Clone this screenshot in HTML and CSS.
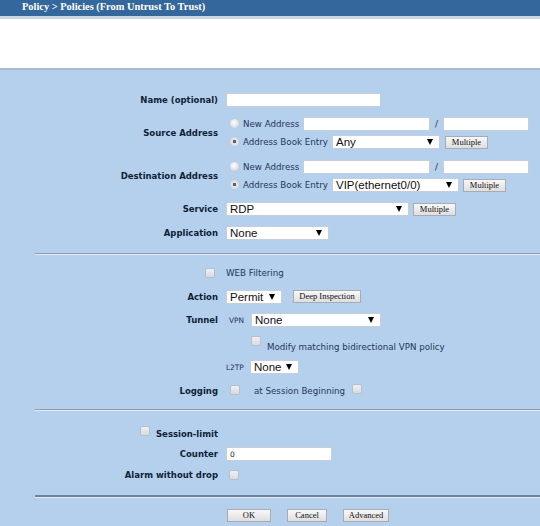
FILE: index.html
```html
<!DOCTYPE html>
<html>
<head>
<meta charset="utf-8">
<title>Policy</title>
<link rel="stylesheet" href="styles.css">
</head>
<body>
<div class="titlebar"><span class="title">Policy &gt; Policies (From Untrust To Trust)</span></div>
<div class="whiteband"></div>
<div class="form">
  <div class="section s1">
    <div class="row">
      <div class="lbl">Name (optional)</div>
      <div class="field"><input class="inp w-name" type="text"></div>
    </div>
    <div class="row block">
      <div class="lbl">Source Address</div>
      <div class="field col">
        <div class="line">
          <span class="radio"></span><span class="txt t-new">New Address</span>
          <input class="inp w-addr" type="text"><span class="slash">/</span><input class="inp w-mask" type="text">
        </div>
        <div class="line">
          <span class="radio on"></span><span class="txt t-book">Address Book Entry</span>
          <div class="sel w-any"><span>Any</span><i class="arr"></i></div>
          <button class="btn b-mult">Multiple</button>
        </div>
      </div>
    </div>
    <div class="row block b-dst">
      <div class="lbl">Destination Address</div>
      <div class="field col">
        <div class="line">
          <span class="radio"></span><span class="txt t-new">New Address</span>
          <input class="inp w-addr" type="text"><span class="slash">/</span><input class="inp w-mask" type="text">
        </div>
        <div class="line">
          <span class="radio on"></span><span class="txt t-book">Address Book Entry</span>
          <div class="sel w-vip"><span>VIP(ethernet0/0)</span><i class="arr"></i></div>
          <button class="btn b-mult">Multiple</button>
        </div>
      </div>
    </div>
    <div class="row">
      <div class="lbl">Service</div>
      <div class="field">
        <div class="sel w-svc"><span>RDP</span><i class="arr"></i></div>
        <button class="btn b-mult">Multiple</button>
      </div>
    </div>
    <div class="row">
      <div class="lbl">Application</div>
      <div class="field">
        <div class="sel w-app"><span>None</span><i class="arr"></i></div>
      </div>
    </div>
  </div>
  <div class="sep"></div>
  <div class="section s2">
    <div class="row">
      <div class="lbl"><span class="chk c-web"></span></div>
      <div class="field"><span class="txt">WEB Filtering</span></div>
    </div>
    <div class="row">
      <div class="lbl">Action</div>
      <div class="field">
        <div class="sel w-act"><span>Permit</span><i class="arr"></i></div>
        <button class="btn b-deep">Deep Inspection</button>
      </div>
    </div>
    <div class="row">
      <div class="lbl">Tunnel</div>
      <div class="field">
        <span class="small t-vpn">VPN</span>
        <div class="sel w-vpn"><span>None</span><i class="arr"></i></div>
      </div>
    </div>
    <div class="row">
      <div class="lbl"></div>
      <div class="field">
        <span class="chk c-mod"></span><span class="txt t-mod">Modify matching bidirectional VPN policy</span>
      </div>
    </div>
    <div class="row">
      <div class="lbl"></div>
      <div class="field">
        <span class="small t-l2tp">L2TP</span>
        <div class="sel w-l2tp"><span>None</span><i class="arr"></i></div>
      </div>
    </div>
    <div class="row">
      <div class="lbl">Logging</div>
      <div class="field">
        <span class="chk c-log"></span><span class="txt t-sess">at Session Beginning</span><span class="chk c-sess"></span>
      </div>
    </div>
  </div>
  <div class="sep"></div>
  <div class="section s3">
    <div class="row">
      <div class="lbl"><span class="chk c-limit"></span>Session-limit</div>
      <div class="field"></div>
    </div>
    <div class="row">
      <div class="lbl">Counter</div>
      <div class="field"><input class="inp w-cnt" type="text" value="0"></div>
    </div>
    <div class="row">
      <div class="lbl">Alarm without drop</div>
      <div class="field"><span class="chk c-alarm"></span></div>
    </div>
  </div>
  <div class="sep dark"></div>
  <div class="buttons">
    <button class="btn b-ok">OK</button>
    <button class="btn b-cancel">Cancel</button>
    <button class="btn b-adv">Advanced</button>
  </div>
</div>
</body>
</html>
```
FILE: styles.css
```css
html, body {
  margin: 0;
  padding: 0;
}
body {
  width: 540px;
  height: 526px;
  overflow: hidden;
  background: #b5d0ec;
  font-family: "DejaVu Sans", Verdana, sans-serif;
  color: #1b2b44;
}
.titlebar {
  height: 16px;
  background: #34679b;
  border-bottom: 3px solid #c9d7e6;
  box-sizing: content-box;
}
.title {
  display: block;
  padding-left: 22px;
  font-family: "Liberation Serif", "Times New Roman", serif;
  font-weight: bold;
  font-size: 10.4px;
  line-height: 14px;
  color: #ffffff;
}
.whiteband {
  height: 49px;
  background: #ffffff;
  border-bottom: 2px solid #a9bccf;
}
.form {
  display: flex;
  flex-direction: column;
}
.section {
  display: flex;
  flex-direction: column;
}
.s1 {
  padding-top: 23px;
  padding-bottom: 13px;
  gap: 10px;
}
.s1 .b-dst {
  margin-top: 1px;
}
.s2 {
  padding-top: 11px;
  padding-bottom: 11px;
  gap: 9.5px;
}
.s3 {
  padding-top: 16px;
  padding-bottom: 13px;
  gap: 6.5px;
}
.row {
  display: flex;
  align-items: center;
  min-height: 14px;
}
.lbl {
  width: 218px;
  flex: none;
  display: flex;
  justify-content: flex-end;
  align-items: center;
  font-weight: bold;
  font-size: 8.5px;
  color: #0e1e36;
  white-space: nowrap;
}
.field {
  margin-left: 8px;
  display: flex;
  align-items: center;
  white-space: nowrap;
}
.col {
  flex-direction: column;
  align-items: flex-start;
  gap: 4px;
}
.line {
  display: flex;
  align-items: center;
  height: 14px;
}
.txt {
  font-size: 8.7px;
  color: #22365a;
}
.small {
  font-size: 7.4px;
  color: #22365a;
}
.inp {
  box-sizing: border-box;
  height: 14px;
  margin: 0;
  padding: 0 3px;
  border: 1px solid #c4cfdb;
  background: #ffffff;
  font-family: "DejaVu Sans", sans-serif;
  font-size: 7.5px;
  color: #222;
  outline: none;
}
.w-name { width: 155px; }
.w-addr { width: 127px; }
.w-mask { width: 86px; }
.w-cnt { width: 106px; }
.slash {
  width: 13px;
  text-align: center;
  font-size: 9px;
  color: #333;
}
.radio {
  width: 9px;
  height: 9px;
  margin-left: 4px;
  border-radius: 50%;
  background: radial-gradient(circle at 45% 40%, #ffffff 0%, #dfe3e8 55%, #c2c8d0 100%);
  box-shadow: 0 0 0 0.5px #b9c1cb;
  position: relative;
  top: -1px;
  flex: none;
}
.radio.on {
  background: radial-gradient(circle, #5a6470 0%, #5a6470 22%, #e4e7ea 32%, #cfd4da 100%);
}
.t-new {
  margin-left: 4px;
  width: 60px;
  display: inline-block;
}
.t-book {
  margin-left: 4px;
  width: 89px;
  display: inline-block;
}
.sel {
  box-sizing: border-box;
  height: 14px;
  display: flex;
  align-items: center;
  justify-content: space-between;
  background: #ffffff;
  border: 1px solid #c4cfdb;
  padding: 0 6px 0 3px;
  font-family: "Liberation Sans", Arial, sans-serif;
  font-size: 11.5px;
  color: #111;
  flex: none;
}
.sel span {
  line-height: 12px;
}
.arr {
  width: 0;
  height: 0;
  border-left: 3.5px solid transparent;
  border-right: 3.5px solid transparent;
  border-top: 6px solid #000;
}
.w-any { width: 108px; }
.w-vip { width: 127px; }
.w-svc { width: 183px; }
.w-app { width: 103px; }
.w-act { width: 56px; }
.w-vpn { width: 130px; }
.w-l2tp { width: 49px; }
.btn {
  box-sizing: border-box;
  height: 13px;
  margin: 0;
  padding: 0;
  border: 1px solid #a8acb2;
  background: linear-gradient(#f8f8f8, #dedede);
  font-family: "Liberation Serif", "Times New Roman", serif;
  font-size: 8.5px;
  line-height: 11px;
  color: #111;
  flex: none;
}
.b-mult { width: 43px; margin-left: 5px; }
.w-vip + .b-mult { margin-left: 4px; }
.w-svc + .b-mult { margin-left: 4px; }
.b-deep { width: 68px; margin-left: 11px; }
.chk {
  display: inline-block;
  width: 10px;
  height: 10px;
  box-sizing: border-box;
  border: 1px solid #b8bfc8;
  border-radius: 2px;
  background: linear-gradient(#eef0f3, #d6dbe1);
  flex: none;
}
.c-web { margin-right: 3px; }
.t-vpn { margin-left: 3px; width: 22px; }
.c-mod { margin-left: 25px; position: relative; top: -3px; }
.t-mod { margin-left: 6px; position: relative; top: 3px; }
.t-l2tp { margin-left: 0; width: 24px; }
.c-log { margin-left: 4px; position: relative; top: -1px; }
.t-sess { margin-left: 14px; width: 98px; display: inline-block; }
.c-sess { position: relative; top: -2px; }
.c-limit { margin-right: 6px; position: relative; top: -3px; }
.c-alarm { margin-left: 3px; }
.sep {
  margin-left: 35px;
  height: 1px;
  background: #8d9cae;
  border-bottom: 1px solid #e3ecf6;
}
.sep.dark {
  height: 2px;
  background: #6f829a;
}
.buttons {
  display: flex;
  padding-top: 11px;
  padding-left: 227px;
  gap: 16px;
}
.b-ok { width: 44px; }
.b-cancel { width: 40px; }
.b-adv { width: 46px; }
```
